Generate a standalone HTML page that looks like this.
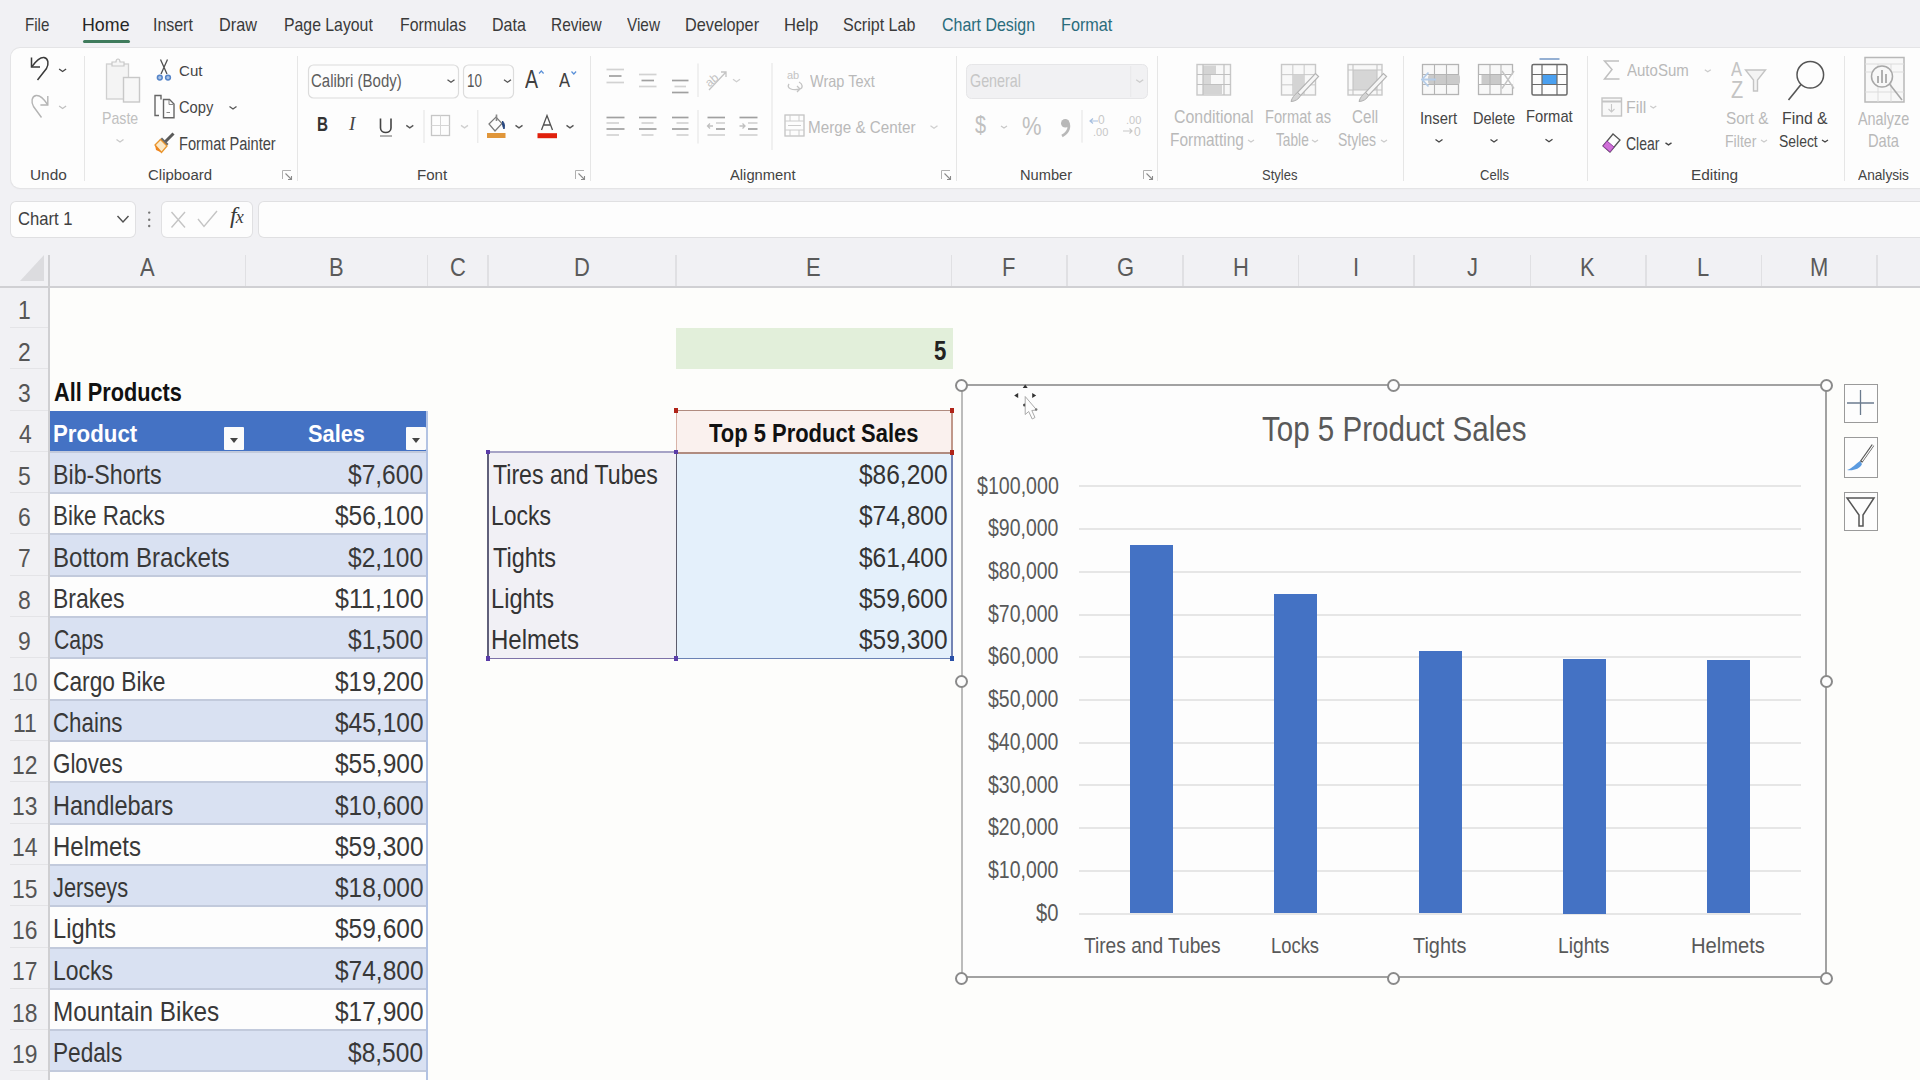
<!DOCTYPE html>
<html><head><meta charset="utf-8">
<style>
*{margin:0;padding:0;box-sizing:border-box}
html,body{width:1920px;height:1080px;overflow:hidden;background:#f1f1f4;font-family:"Liberation Sans",sans-serif;position:relative}
.t{position:absolute;white-space:nowrap;transform-origin:0 0;z-index:2}
.b{position:absolute}
svg{position:absolute;overflow:visible}
</style></head><body>

<div class="t" style="left:25.29px;top:-25.30px;font-size:18.17px;line-height:100px;color:#3a3a3a;transform:scaleX(0.8339);">File</div>
<div class="t" style="left:82.17px;top:-25.30px;font-size:18.17px;line-height:100px;color:#262626;transform:scaleX(0.9816);">Home</div>
<div class="t" style="left:153.27px;top:-25.30px;font-size:18.17px;line-height:100px;color:#3a3a3a;transform:scaleX(0.8765);">Insert</div>
<div class="t" style="left:219.00px;top:-25.30px;font-size:18.17px;line-height:100px;color:#3a3a3a;transform:scaleX(0.8958);">Draw</div>
<div class="t" style="left:283.73px;top:-25.30px;font-size:18.17px;line-height:100px;color:#3a3a3a;transform:scaleX(0.8709);">Page Layout</div>
<div class="t" style="left:399.98px;top:-25.30px;font-size:18.17px;line-height:100px;color:#3a3a3a;transform:scaleX(0.8734);">Formulas</div>
<div class="t" style="left:491.72px;top:-25.30px;font-size:18.17px;line-height:100px;color:#3a3a3a;transform:scaleX(0.8839);">Data</div>
<div class="t" style="left:551.26px;top:-25.30px;font-size:18.17px;line-height:100px;color:#3a3a3a;transform:scaleX(0.8497);">Review</div>
<div class="t" style="left:626.72px;top:-25.30px;font-size:18.17px;line-height:100px;color:#3a3a3a;transform:scaleX(0.8442);">View</div>
<div class="t" style="left:684.70px;top:-25.30px;font-size:18.17px;line-height:100px;color:#3a3a3a;transform:scaleX(0.8947);">Developer</div>
<div class="t" style="left:783.56px;top:-25.30px;font-size:18.17px;line-height:100px;color:#3a3a3a;transform:scaleX(0.9188);">Help</div>
<div class="t" style="left:842.68px;top:-25.30px;font-size:18.17px;line-height:100px;color:#3a3a3a;transform:scaleX(0.8864);">Script Lab</div>
<div class="t" style="left:941.90px;top:-25.30px;font-size:18.17px;line-height:100px;color:#2a6c7c;transform:scaleX(0.8785);">Chart Design</div>
<div class="t" style="left:1060.90px;top:-25.30px;font-size:18.17px;line-height:100px;color:#2a6c7c;transform:scaleX(0.8935);">Format</div>
<div class="b" style="left:83px;top:40px;width:47px;height:3px;background:#3f7b5c;border-radius:2px"></div>
<div class="b" style="left:11px;top:48px;width:1930px;height:140px;background:#fdfdfd;border-radius:9px;box-shadow:0 0 0 1px #e4e4e6, 0 1px 2px rgba(0,0,0,.06)"></div>
<div class="b" style="left:83.5px;top:56px;width:1px;height:125px;background:#e6e6e6"></div>
<div class="b" style="left:296.5px;top:56px;width:1px;height:125px;background:#e6e6e6"></div>
<div class="b" style="left:589.5px;top:56px;width:1px;height:125px;background:#e6e6e6"></div>
<div class="b" style="left:955.5px;top:56px;width:1px;height:125px;background:#e6e6e6"></div>
<div class="b" style="left:1156.5px;top:56px;width:1px;height:125px;background:#e6e6e6"></div>
<div class="b" style="left:1402.5px;top:56px;width:1px;height:125px;background:#e6e6e6"></div>
<div class="b" style="left:1586.5px;top:56px;width:1px;height:125px;background:#e6e6e6"></div>
<div class="b" style="left:1843.5px;top:56px;width:1px;height:125px;background:#e6e6e6"></div>
<div class="t" style="left:30.35px;top:125.26px;font-size:14.83px;line-height:100px;color:#444;transform:scaleX(1.0377);">Undo</div>
<div class="t" style="left:147.55px;top:125.26px;font-size:14.83px;line-height:100px;color:#444;transform:scaleX(1.0089);">Clipboard</div>
<div class="t" style="left:417.19px;top:125.26px;font-size:14.83px;line-height:100px;color:#444;transform:scaleX(1.0179);">Font</div>
<div class="t" style="left:729.70px;top:125.26px;font-size:14.83px;line-height:100px;color:#444;transform:scaleX(0.9951);">Alignment</div>
<div class="t" style="left:1019.83px;top:125.26px;font-size:14.83px;line-height:100px;color:#444;transform:scaleX(0.9884);">Number</div>
<div class="t" style="left:1262.01px;top:125.26px;font-size:14.83px;line-height:100px;color:#444;transform:scaleX(0.8772);">Styles</div>
<div class="t" style="left:1480.35px;top:125.26px;font-size:14.83px;line-height:100px;color:#444;transform:scaleX(0.8794);">Cells</div>
<div class="t" style="left:1691.47px;top:125.26px;font-size:14.83px;line-height:100px;color:#444;transform:scaleX(1.0384);">Editing</div>
<div class="t" style="left:1858.00px;top:125.26px;font-size:14.83px;line-height:100px;color:#444;transform:scaleX(0.9231);">Analysis</div>
<svg style="left:282px;top:170px" width="11" height="11"><path d="M0.5 9 V0.5 H9" fill="none" stroke="#b0b0b0" stroke-width="1"/><path d="M3.5 3.5 L9.5 9.5 M6 9.5 H9.5 V6" fill="none" stroke="#8a8a8a" stroke-width="1.1"/></svg>
<svg style="left:575px;top:170px" width="11" height="11"><path d="M0.5 9 V0.5 H9" fill="none" stroke="#b0b0b0" stroke-width="1"/><path d="M3.5 3.5 L9.5 9.5 M6 9.5 H9.5 V6" fill="none" stroke="#8a8a8a" stroke-width="1.1"/></svg>
<svg style="left:941px;top:170px" width="11" height="11"><path d="M0.5 9 V0.5 H9" fill="none" stroke="#b0b0b0" stroke-width="1"/><path d="M3.5 3.5 L9.5 9.5 M6 9.5 H9.5 V6" fill="none" stroke="#8a8a8a" stroke-width="1.1"/></svg>
<svg style="left:1143px;top:170px" width="11" height="11"><path d="M0.5 9 V0.5 H9" fill="none" stroke="#b0b0b0" stroke-width="1"/><path d="M3.5 3.5 L9.5 9.5 M6 9.5 H9.5 V6" fill="none" stroke="#8a8a8a" stroke-width="1.1"/></svg>
<div class="t" style="left:809.63px;top:31.71px;font-size:16.72px;line-height:100px;color:#b9b9b9;transform:scaleX(0.8685);">Wrap Text</div>
<div class="t" style="left:808.48px;top:77.76px;font-size:16.86px;line-height:100px;color:#b9b9b9;transform:scaleX(0.9033);">Merge & Center</div>
<div class="t" style="left:969.78px;top:30.70px;font-size:18.17px;line-height:100px;color:#c6c6c6;transform:scaleX(0.7888);">General</div>
<div class="t" style="left:974.80px;top:74.69px;font-size:23.98px;line-height:100px;color:#c0c0c0;transform:scaleX(0.8261);">$</div>
<div class="t" style="left:1022.23px;top:76.09px;font-size:25.44px;line-height:100px;color:#c0c0c0;transform:scaleX(0.8630);">%</div>
<div class="t" style="left:1174.21px;top:66.96px;font-size:17.44px;line-height:100px;color:#b9b9b9;transform:scaleX(0.9108);">Conditional</div>
<div class="t" style="left:1169.76px;top:90.26px;font-size:17.44px;line-height:100px;color:#b9b9b9;transform:scaleX(0.8857);">Formatting</div>
<div class="t" style="left:1264.83px;top:66.96px;font-size:17.44px;line-height:100px;color:#b9b9b9;transform:scaleX(0.8407);">Format as</div>
<div class="t" style="left:1276.23px;top:90.26px;font-size:17.44px;line-height:100px;color:#b9b9b9;transform:scaleX(0.7866);">Table</div>
<div class="t" style="left:1352.24px;top:66.96px;font-size:17.44px;line-height:100px;color:#b9b9b9;transform:scaleX(0.8716);">Cell</div>
<div class="t" style="left:1338.37px;top:90.26px;font-size:17.44px;line-height:100px;color:#b9b9b9;transform:scaleX(0.8020);">Styles</div>
<div class="t" style="left:1420.07px;top:69.31px;font-size:17.01px;line-height:100px;color:#454545;transform:scaleX(0.8704);">Insert</div>
<div class="t" style="left:1473.34px;top:69.31px;font-size:17.01px;line-height:100px;color:#454545;transform:scaleX(0.8549);">Delete</div>
<div class="t" style="left:1525.82px;top:67.41px;font-size:17.01px;line-height:100px;color:#454545;transform:scaleX(0.8668);">Format</div>
<div class="t" style="left:1627.00px;top:20.66px;font-size:15.99px;line-height:100px;color:#b9b9b9;transform:scaleX(0.9390);">AutoSum</div>
<div class="t" style="left:1625.73px;top:57.61px;font-size:17.01px;line-height:100px;color:#b9b9b9;transform:scaleX(0.9367);">Fill</div>
<div class="t" style="left:1626.30px;top:94.41px;font-size:17.88px;line-height:100px;color:#454545;transform:scaleX(0.7836);">Clear</div>
<div class="t" style="left:1731.30px;top:18.65px;font-size:20.35px;line-height:100px;color:#c4c4c4;transform:scaleX(0.8129);">A</div>
<div class="t" style="left:1730.90px;top:39.64px;font-size:23.26px;line-height:100px;color:#c4c4c4;transform:scaleX(0.8600);">Z</div>
<div class="t" style="left:1726.31px;top:67.61px;font-size:16.42px;line-height:100px;color:#b9b9b9;transform:scaleX(0.9329);">Sort &</div>
<div class="t" style="left:1724.67px;top:91.21px;font-size:16.42px;line-height:100px;color:#b9b9b9;transform:scaleX(0.8596);">Filter</div>
<div class="t" style="left:1781.73px;top:67.61px;font-size:16.42px;line-height:100px;color:#454545;transform:scaleX(0.9628);">Find &</div>
<div class="t" style="left:1778.97px;top:91.21px;font-size:16.42px;line-height:100px;color:#454545;transform:scaleX(0.8490);">Select</div>
<div class="t" style="left:1858.00px;top:68.70px;font-size:18.17px;line-height:100px;color:#b9b9b9;transform:scaleX(0.7919);">Analyze</div>
<div class="t" style="left:1867.83px;top:90.66px;font-size:17.44px;line-height:100px;color:#b9b9b9;transform:scaleX(0.8416);">Data</div>
<svg style="left:0;top:0" width="1920" height="200"><path d="M32 66.5 C36 61 40 57 44 57.5 C48.5 58.5 49 64 46.5 68.5 L37.5 80" fill="none" stroke="#3a3a3a" stroke-width="1.5"/><path d="M31.5 57.5 V67 H40" fill="none" stroke="#3a3a3a" stroke-width="1.5"/><path d="M59.1 68.95 L62.6 71.45 L66.1 68.95" fill="none" stroke="#444" stroke-width="1.3"/><path d="M47.5 104.5 C44 99 40 95 36 95.5 C31.5 96.5 31 102 33.5 106.5 L41.5 117.5" fill="none" stroke="#b4b4b4" stroke-width="1.4"/><path d="M47.8 96 V105 H40.4" fill="none" stroke="#b4b4b4" stroke-width="1.4"/><path d="M59.1 106.05 L62.6 108.55 L66.1 106.05" fill="none" stroke="#c0c0c0" stroke-width="1.3"/><rect x="106.5" y="64" width="22" height="35" fill="#f4f4f4" stroke="#d0d0d0" stroke-width="1.3"/><path d="M112 66 V62 H116 C116 58 120 58 120 62 H124 V66 Z" fill="#f6f6f6" stroke="#c8c8c8" stroke-width="1.2"/><rect x="123.5" y="77.5" width="16" height="24.5" fill="#f7f7f7" stroke="#c8c8c8" stroke-width="1.4"/><path d="M116.5 139.45 L120 141.95 L123.5 139.45" fill="none" stroke="#c8c8c8" stroke-width="1.3"/><path d="M160.5 59.5 L167 74 M167.5 59.5 L161 74" stroke="#505050" stroke-width="1.3"/><circle cx="159.8" cy="77.6" r="2.4" fill="#a9c3e6" stroke="#5584c8" stroke-width="1.5"/><circle cx="168" cy="77.6" r="2.4" fill="#a9c3e6" stroke="#5584c8" stroke-width="1.5"/><path d="M159 115.5 H155 V95.5 H161 V99.5" fill="none" stroke="#666" stroke-width="1.4"/><path d="M163.5 99.5 H169.5 L174 104 V117.8 H163.5 Z" fill="#fdfdfd" stroke="#666" stroke-width="1.4"/><path d="M169 100 V104.5 H173.5 M166.5 112.5 H170" fill="none" stroke="#888" stroke-width="1"/><path d="M229.5 106.45 L233 108.95 L236.5 106.45" fill="none" stroke="#555" stroke-width="1.3"/><path d="M165 142 L173.5 133.5" stroke="#5a5a5a" stroke-width="3"/><path d="M162 137.5 L168.5 144 L166 146.5 L159.5 140 Z" fill="#6a6a6a"/><path d="M155 145 L160.5 139.5 L167 146 L161.5 152.5 Z" fill="#fbe9c8" stroke="#e8962e" stroke-width="1.3"/><path d="M155 145 L158.5 148.5 L161.5 152.5 L156 150 Z" fill="#f0841c"/><rect x="308.5" y="65" width="150" height="33" rx="5" fill="#fdfdfd" stroke="#dcdcdc" stroke-width="1.2"/><rect x="463.5" y="65" width="50" height="33" rx="5" fill="#fdfdfd" stroke="#dcdcdc" stroke-width="1.2"/><path d="M447.5 79.75 L451 82.25 L454.5 79.75" fill="none" stroke="#555" stroke-width="1.3"/><path d="M504.0 79.75 L507.5 82.25 L511.0 79.75" fill="none" stroke="#555" stroke-width="1.3"/><path d="M424 110 V143 M477.8 110 V143" stroke="#e3e3e3" stroke-width="1"/><path d="M380.5 118.5 V128 C380.5 134 391 134 391 128 V118.5" fill="none" stroke="#444" stroke-width="1.6"/><path d="M380 136 H392" stroke="#666" stroke-width="1"/><path d="M406.3 125.35 L409.8 127.85 L413.3 125.35" fill="none" stroke="#555" stroke-width="1.3"/><rect x="431.5" y="115.5" width="18" height="20" fill="none" stroke="#c6c6c6" stroke-width="1.3"/><path d="M440.5 115.5 V135.5 M431.5 125.5 H449.5" stroke="#d6d6d6" stroke-width="1"/><path d="M461.0 125.35 L464.5 127.85 L468.0 125.35" fill="none" stroke="#cfcfcf" stroke-width="1.3"/><path d="M489 124 L496 117 L502 123.5 L495 131 Z" fill="#fdfdfd" stroke="#7a7a7a" stroke-width="1.2"/><path d="M496.5 114.5 V121" stroke="#888" stroke-width="1.6"/><path d="M502.5 121 C504.5 123 505 126 504 129 C503 127 502 124.5 502.5 121 Z" fill="#25457e" stroke="#25457e" stroke-width="1"/><rect x="487" y="133" width="18.5" height="5" fill="#e0963a"/><path d="M515.5 125.35 L519 127.85 L522.5 125.35" fill="none" stroke="#555" stroke-width="1.3"/><rect x="537.5" y="133.2" width="19.5" height="5" fill="#e0200c"/><path d="M566.5 125.35 L570 127.85 L573.5 125.35" fill="none" stroke="#555" stroke-width="1.3"/><path d="M606.5 69.5 H624" stroke="#d2d2d2" stroke-width="1.7"/><path d="M609 76 H621.5" stroke="#a0a0a0" stroke-width="1.7"/><path d="M606.5 82.5 H624" stroke="#d2d2d2" stroke-width="1.7"/><path d="M639 74.5 H656.5" stroke="#d2d2d2" stroke-width="1.7"/><path d="M641.5 80.5 H654" stroke="#a0a0a0" stroke-width="1.7"/><path d="M639 86.5 H656.5" stroke="#d2d2d2" stroke-width="1.7"/><path d="M672 80.5 H688.5" stroke="#a0a0a0" stroke-width="1.7"/><path d="M674.5 86.5 H686" stroke="#d2d2d2" stroke-width="1.7"/><path d="M672 92.5 H688.5" stroke="#a0a0a0" stroke-width="1.7"/><path d="M698 63.5 V97 M698 110 V143.5 M772 63 V150" stroke="#e3e3e3" stroke-width="1"/><path d="M606.5 117.5 H624.5" stroke="#a0a0a0" stroke-width="1.7"/><path d="M606.5 123 H619" stroke="#d2d2d2" stroke-width="1.7"/><path d="M606.5 129 H624.5" stroke="#a0a0a0" stroke-width="1.7"/><path d="M606.5 135 H619" stroke="#d2d2d2" stroke-width="1.7"/><path d="M639 117.5 H656.5" stroke="#a0a0a0" stroke-width="1.7"/><path d="M641.5 123 H653.5" stroke="#d2d2d2" stroke-width="1.7"/><path d="M639 129 H656.5" stroke="#a0a0a0" stroke-width="1.7"/><path d="M641.5 135 H653.5" stroke="#d2d2d2" stroke-width="1.7"/><path d="M672 117.5 H688.5" stroke="#a0a0a0" stroke-width="1.7"/><path d="M676.5 123 H688.5" stroke="#d2d2d2" stroke-width="1.7"/><path d="M672 129 H688.5" stroke="#a0a0a0" stroke-width="1.7"/><path d="M676.5 135 H688.5" stroke="#d2d2d2" stroke-width="1.7"/><path d="M707.5 117.5 H725" stroke="#a0a0a0" stroke-width="1.7"/><path d="M716 123 H725" stroke="#d2d2d2" stroke-width="1.7"/><path d="M716 129 H725" stroke="#a0a0a0" stroke-width="1.7"/><path d="M707.5 135 H725" stroke="#d2d2d2" stroke-width="1.7"/><path d="M713 126 H707.5 M710 123.5 L707.5 126 L710 128.5" fill="none" stroke="#c0c0c0" stroke-width="1.3"/><path d="M739.5 117.5 H757.5" stroke="#a0a0a0" stroke-width="1.7"/><path d="M748 123 H757.5" stroke="#d2d2d2" stroke-width="1.7"/><path d="M748 129 H757.5" stroke="#a0a0a0" stroke-width="1.7"/><path d="M739.5 135 H757.5" stroke="#d2d2d2" stroke-width="1.7"/><path d="M739.5 126 H745 M742.5 123.5 L745 126 L742.5 128.5" fill="none" stroke="#c0c0c0" stroke-width="1.3"/><text x="705" y="84" font-size="12" fill="#c4c4c4" transform="rotate(-40 712 80)" font-family="Liberation Sans">ab</text><path d="M709 90 L726 72 M721 72 H726 V77" fill="none" stroke="#c4c4c4" stroke-width="1.3"/><path d="M733.0 79.25 L736.5 81.75 L740.0 79.25" fill="none" stroke="#cfcfcf" stroke-width="1.3"/><text x="787" y="79" font-size="11" fill="#c4c4c4" font-family="Liberation Sans">ab</text><path d="M789 84 C786 88 792 91 800 89 M797 86 L800 89 L797 92 M799 82 C803 84 803 88 800 89" fill="none" stroke="#c4c4c4" stroke-width="1.3"/><rect x="785" y="115" width="19" height="21" fill="none" stroke="#c4c4c4" stroke-width="1.3"/><path d="M785 121 H804 M785 130 H804 M790 115 V121 M799 115 V121 M790 130 V136 M799 130 V136 M788 125.5 H801" stroke="#cccccc" stroke-width="1"/><path d="M930.5 125.75 L934 128.25 L937.5 125.75" fill="none" stroke="#cfcfcf" stroke-width="1.3"/><rect x="966.5" y="64.5" width="181" height="34" rx="5" fill="#f1f1f3" stroke="#e6e6e8" stroke-width="1"/><path d="M1130.7 66 V97" stroke="#e8e8ea" stroke-width="1"/><path d="M1136.2 79.75 L1139.7 82.25 L1143.2 79.75" fill="none" stroke="#cccccc" stroke-width="1.3"/><path d="M1001 126.0 L1004 128.0 L1007 126.0" fill="none" stroke="#c8c8c8" stroke-width="1.3"/><circle cx="1065.3" cy="123.3" r="4.3" fill="#b8b8b8"/><path d="M1067.5 122 C1070.5 126 1069 132 1062 136" fill="none" stroke="#b8b8b8" stroke-width="2.6"/><path d="M1082 110 V142.7" stroke="#e3e3e3" stroke-width="1"/><text x="1098" y="124" font-size="12" fill="#c8c8c8" font-family="Liberation Sans">0</text><text x="1093" y="136" font-size="11" fill="#c8c8c8" font-family="Liberation Sans">.00</text><path d="M1090 121 H1098 M1093 118.5 L1090 121 L1093 123.5" fill="none" stroke="#a8c0e0" stroke-width="1.2"/><text x="1126" y="124" font-size="11" fill="#c8c8c8" font-family="Liberation Sans">.00</text><text x="1134" y="136" font-size="12" fill="#c8c8c8" font-family="Liberation Sans">0</text><path d="M1123 131 H1132 M1129.5 128.5 L1132 131 L1129.5 133.5" fill="none" stroke="#c8c8c8" stroke-width="1.2"/><rect x="1197" y="64.5" width="33.5" height="30.5" fill="#f8f8f8" stroke="#c8c8c8" stroke-width="1.4"/><rect x="1203" y="65.5" width="13" height="9" fill="#d4d4d4"/><rect x="1203" y="75" width="8" height="9" fill="#d8d8d8"/><rect x="1203" y="85" width="19" height="9" fill="#d4d4d4"/><path d="M1203 64.5 V95 M1224 64.5 V95 M1197 74.5 H1230.5 M1197 84.5 H1230.5" stroke="#c0c0c0" stroke-width="1.2"/><rect x="1281.5" y="64.5" width="34.0" height="30.5" fill="#f8f8f8" stroke="#c8c8c8" stroke-width="1.4"/><path d="M1292.8333333333333 64.5 V95" stroke="#c8c8c8" stroke-width="1"/><path d="M1304.1666666666667 64.5 V95" stroke="#c8c8c8" stroke-width="1"/><path d="M1281.5 74.66666666666667 H1315.5" stroke="#c8c8c8" stroke-width="1"/><path d="M1281.5 84.83333333333333 H1315.5" stroke="#c8c8c8" stroke-width="1"/><rect x="1293" y="75" width="11" height="19" fill="#d4d4d4"/><g transform="translate(0,0)"><path d="M1318.6 76.5 L1315.4 73.5 L1297.4 92.5 L1300.6 95.5 Z" fill="#f6f6f6" stroke="#b4b4b4" stroke-width="1.1"/><path d="M1297.4 92.5 L1300.6 95.5 C1299 99 1295 101.5 1291 101.5 C1292 98 1294 95 1297.4 92.5 Z" fill="#d4d4d4" stroke="#b0b0b0" stroke-width="1"/></g><rect x="1348" y="64.5" width="34" height="30.5" fill="#f8f8f8" stroke="#c8c8c8" stroke-width="1.4"/><rect x="1353" y="70" width="24" height="20" fill="#d6d6d6"/><path d="M1353 64.5 V95 M1377 64.5 V95 M1348 70 H1382 M1348 90 H1382" stroke="#c4c4c4" stroke-width="1.1"/><g transform="translate(68,0)"><path d="M1318.6 76.5 L1315.4 73.5 L1297.4 92.5 L1300.6 95.5 Z" fill="#f6f6f6" stroke="#b4b4b4" stroke-width="1.1"/><path d="M1297.4 92.5 L1300.6 95.5 C1299 99 1295 101.5 1291 101.5 C1292 98 1294 95 1297.4 92.5 Z" fill="#d4d4d4" stroke="#b0b0b0" stroke-width="1"/></g><path d="M1248 140.0 L1251 142.0 L1254 140.0" fill="none" stroke="#cccccc" stroke-width="1.3"/><path d="M1312 140.0 L1315 142.0 L1318 140.0" fill="none" stroke="#cccccc" stroke-width="1.3"/><path d="M1381 140.0 L1384 142.0 L1387 140.0" fill="none" stroke="#cccccc" stroke-width="1.3"/><rect x="1422.5" y="64.5" width="36" height="30" fill="#f8f8f8" stroke="#b4b4b4" stroke-width="1.3"/><rect x="1428" y="74.5" width="32" height="10" rx="3" fill="#cacaca"/><path d="M1434.5 64.5 V94.5 M1446.5 64.5 V94.5 M1422.5 74.5 H1458.5 M1422.5 84.5 H1458.5" stroke="#b4b4b4" stroke-width="1.1"/><path d="M1428.5 72.5 L1422 79.5 L1428.5 86.5 M1423 79.5 H1436" fill="none" stroke="#b4cce8" stroke-width="1.8"/><rect x="1478.5" y="64.5" width="34" height="30" fill="#f8f8f8" stroke="#b4b4b4" stroke-width="1.3"/><rect x="1479" y="74.5" width="22" height="10" fill="#fdfdfd"/><rect x="1481.5" y="74.5" width="19.5" height="10" fill="#cacaca"/><rect x="1501.5" y="73.5" width="12" height="12" fill="#fdfdfd"/><path d="M1490 64.5 V94.5 M1501 64.5 V94.5 M1478.5 74.5 H1512.5 M1478.5 84.5 H1512.5" stroke="#b4b4b4" stroke-width="1.1"/><path d="M1502 71 L1514 88.5 M1514 71 L1502 88.5" stroke="#c4c4c4" stroke-width="1.4"/><rect x="1542" y="74.5" width="15" height="10" fill="#4aa0f0"/><rect x="1532" y="64.5" width="35" height="30.5" rx="1.5" fill="none" stroke="#6a6a6a" stroke-width="1.5"/><path d="M1542 64.5 V95 M1557 64.5 V95 M1532 74.5 H1567 M1532 84.5 H1567" stroke="#6a6a6a" stroke-width="1.2"/><path d="M1539.5 59 H1559.5" stroke="#7a9cc8" stroke-width="1.6"/><path d="M1435.5 139.45 L1439 141.95 L1442.5 139.45" fill="none" stroke="#444" stroke-width="1.3"/><path d="M1490.5 139.45 L1494 141.95 L1497.5 139.45" fill="none" stroke="#444" stroke-width="1.3"/><path d="M1545.5 139.25 L1549 141.75 L1552.5 139.25" fill="none" stroke="#444" stroke-width="1.3"/><path d="M1619 61 H1604.5 L1612 69.5 L1604.5 79 H1619.5" fill="none" stroke="#c0c0c0" stroke-width="1.5"/><path d="M1704.8 69.7 L1707.8 71.7 L1710.8 69.7" fill="none" stroke="#cccccc" stroke-width="1.3"/><rect x="1602" y="98" width="19.5" height="18" fill="#f8f8f8" stroke="#c4c4c4" stroke-width="1.4"/><path d="M1602 101.5 H1621.5" stroke="#c4c4c4" stroke-width="2"/><path d="M1611.5 104 V112 M1608.5 109 L1611.5 112 L1614.5 109" fill="none" stroke="#c8c8c8" stroke-width="1.1"/><path d="M1650.3 106.0 L1653.3 108.0 L1656.3 106.0" fill="none" stroke="#cccccc" stroke-width="1.3"/><path d="M1603 146 L1613 134 L1620 140 L1610 152 Z" fill="#fdfdfd" stroke="#555" stroke-width="1.3"/><path d="M1603 146 L1607 141 L1614 147 L1610 152 Z" fill="#d070d8" stroke="#9040a0" stroke-width="1"/><path d="M1665.5 142.9 L1668.5 144.9 L1671.5 142.9" fill="none" stroke="#444" stroke-width="1.3"/><path d="M1745.5 70 H1765.5 L1757.5 80 V91 H1753.5 V80 Z" fill="#f4f4f4" stroke="#c4c4c4" stroke-width="1.4"/><path d="M1761 140.0 L1764 142.0 L1767 140.0" fill="none" stroke="#cccccc" stroke-width="1.3"/><circle cx="1810.3" cy="74.8" r="13.3" fill="#fdfdfd" stroke="#555" stroke-width="1.5"/><path d="M1801 84.5 L1788.5 100" stroke="#555" stroke-width="1.6"/><path d="M1822 140.0 L1825 142.0 L1828 140.0" fill="none" stroke="#444" stroke-width="1.3"/><rect x="1865" y="57.5" width="39" height="44.5" fill="#f8f8f8" stroke="#b8b8b8" stroke-width="1.5"/><path d="M1865 64 H1904 M1865 72 H1904 M1865 92 H1904 M1878 64 V102 M1891 64 V102" stroke="#dcdcdc" stroke-width="1"/><circle cx="1882" cy="76.5" r="10.5" fill="#f8f8f8" stroke="#a8a8a8" stroke-width="1.5"/><path d="M1878 83 V76 M1882 83 V70 M1886 83 V74" stroke="#b0b0b0" stroke-width="2"/><path d="M1889.5 84 L1902 100" stroke="#a8a8a8" stroke-width="1.6"/></svg>
<div class="t" style="left:102.47px;top:69.31px;font-size:17.01px;line-height:100px;color:#c0c0c0;transform:scaleX(0.8324);">Paste</div>
<div class="t" style="left:178.65px;top:21.46px;font-size:15.41px;line-height:100px;color:#454545;transform:scaleX(0.9779);">Cut</div>
<div class="t" style="left:178.66px;top:57.71px;font-size:16.72px;line-height:100px;color:#454545;transform:scaleX(0.8797);">Copy</div>
<div class="t" style="left:178.83px;top:94.11px;font-size:17.88px;line-height:100px;color:#454545;transform:scaleX(0.8191);">Format Painter</div>
<div class="t" style="left:310.65px;top:30.55px;font-size:19.19px;line-height:100px;color:#5c5c5c;transform:scaleX(0.7803);">Calibri (Body)</div>
<div class="t" style="left:466.60px;top:30.55px;font-size:19.19px;line-height:100px;color:#555;transform:scaleX(0.6984);">10</div>
<div class="t" style="left:524.70px;top:28.84px;font-size:25.00px;line-height:100px;color:#404040;transform:scaleX(0.7820);">A</div>
<div class="t" style="left:559.00px;top:30.20px;font-size:21.08px;line-height:100px;color:#404040;transform:scaleX(0.7849);">A</div>
<svg style="left:0;top:0" width="1920" height="200"><path d="M539 73.5 L541.3 71 L543.6 73.5" fill="none" stroke="#5a90d8" stroke-width="1.2"/><path d="M571.5 71.5 L573.8 74 L576.1 71.5" fill="none" stroke="#5a90d8" stroke-width="1.2"/><path d="M541.5 130 L547 115.5 L552.5 130 M543.4 125 H550.6" fill="none" stroke="#505050" stroke-width="1.3"/></svg>
<div class="t" style="left:316.71px;top:75.35px;font-size:19.33px;line-height:100px;color:#333;font-weight:700;transform:scaleX(0.7887);">B</div>
<div class="t" style="left:349px;top:114px;font-size:19px;line-height:19px;color:#444;font-family:'Liberation Serif';font-style:italic">I</div>
<div class="b" style="left:11px;top:202px;width:124px;height:35px;background:#fdfdfd;border-radius:5px;box-shadow:0 0 0 1px #e0e0e2"></div>
<div class="t" style="left:18.17px;top:169.20px;font-size:18.17px;line-height:100px;color:#404040;transform:scaleX(0.9159);">Chart 1</div>
<div class="b" style="left:162px;top:202px;width:90px;height:35px;background:#fdfdfd;border-radius:5px;box-shadow:0 0 0 1px #e0e0e2"></div>
<div class="b" style="left:259px;top:202px;width:1670px;height:35px;background:#fdfdfd;border-radius:5px;box-shadow:0 0 0 1px #e0e0e2"></div>
<svg style="left:0;top:190px" width="300" height="60"><path d="M117.5 26 L123 32 L128.5 26" fill="none" stroke="#505050" stroke-width="1.4"/><circle cx="149.2" cy="22.6" r="1.2" fill="#777"/><circle cx="149.2" cy="29.7" r="1.2" fill="#777"/><circle cx="149.2" cy="36" r="1.2" fill="#777"/><path d="M171.5 22 L185 37.5 M185 22 L171.5 37.5" stroke="#c4c4c4" stroke-width="1.4"/><path d="M198 29 L204 36.5 L217 21" fill="none" stroke="#c4c4c4" stroke-width="1.4"/></svg>
<div class="t" style="left:230px;top:203px;font-size:24px;line-height:24px;color:#3a3a3a;font-family:'Liberation Serif';font-style:italic">f<span style="font-size:18px;margin-left:-1px">x</span></div>
<div class="b" style="left:49px;top:288px;width:1871px;height:792px;background:#fdfdfb"></div>
<div class="b" style="left:244.7px;top:255px;width:1.6px;height:32px;background:#e0e0e3"></div>
<div class="t" style="left:139.94px;top:217.04px;font-size:25.87px;line-height:100px;color:#5a5a5a;transform:scaleX(0.8500);">A</div>
<div class="b" style="left:426.7px;top:255px;width:1.6px;height:32px;background:#e0e0e3"></div>
<div class="t" style="left:328.86px;top:217.04px;font-size:25.87px;line-height:100px;color:#5a5a5a;transform:scaleX(0.8500);">B</div>
<div class="b" style="left:487.2px;top:255px;width:1.6px;height:32px;background:#e0e0e3"></div>
<div class="t" style="left:449.67px;top:217.04px;font-size:25.87px;line-height:100px;color:#5a5a5a;transform:scaleX(0.8500);">C</div>
<div class="b" style="left:675.2px;top:255px;width:1.6px;height:32px;background:#e0e0e3"></div>
<div class="t" style="left:573.70px;top:217.04px;font-size:25.87px;line-height:100px;color:#5a5a5a;transform:scaleX(0.8500);">D</div>
<div class="b" style="left:950.7px;top:255px;width:1.6px;height:32px;background:#e0e0e3"></div>
<div class="t" style="left:806.00px;top:217.04px;font-size:25.87px;line-height:100px;color:#5a5a5a;transform:scaleX(0.8500);">E</div>
<div class="b" style="left:1066.2px;top:255px;width:1.6px;height:32px;background:#e0e0e3"></div>
<div class="t" style="left:1002.10px;top:217.04px;font-size:25.87px;line-height:100px;color:#5a5a5a;transform:scaleX(0.8500);">F</div>
<div class="b" style="left:1182.2px;top:255px;width:1.6px;height:32px;background:#e0e0e3"></div>
<div class="t" style="left:1116.70px;top:217.04px;font-size:25.87px;line-height:100px;color:#5a5a5a;transform:scaleX(0.8500);">G</div>
<div class="b" style="left:1297.7px;top:255px;width:1.6px;height:32px;background:#e0e0e3"></div>
<div class="t" style="left:1232.83px;top:217.04px;font-size:25.87px;line-height:100px;color:#5a5a5a;transform:scaleX(0.8500);">H</div>
<div class="b" style="left:1413.2px;top:255px;width:1.6px;height:32px;background:#e0e0e3"></div>
<div class="t" style="left:1353.23px;top:217.04px;font-size:25.87px;line-height:100px;color:#5a5a5a;transform:scaleX(0.8500);">I</div>
<div class="b" style="left:1529.7px;top:255px;width:1.6px;height:32px;background:#e0e0e3"></div>
<div class="t" style="left:1467.41px;top:217.04px;font-size:25.87px;line-height:100px;color:#5a5a5a;transform:scaleX(0.8500);">J</div>
<div class="b" style="left:1645.2px;top:255px;width:1.6px;height:32px;background:#e0e0e3"></div>
<div class="t" style="left:1580.17px;top:217.04px;font-size:25.87px;line-height:100px;color:#5a5a5a;transform:scaleX(0.8500);">K</div>
<div class="b" style="left:1760.7px;top:255px;width:1.6px;height:32px;background:#e0e0e3"></div>
<div class="t" style="left:1697.10px;top:217.04px;font-size:25.87px;line-height:100px;color:#5a5a5a;transform:scaleX(0.8500);">L</div>
<div class="b" style="left:1876.2px;top:255px;width:1.6px;height:32px;background:#e0e0e3"></div>
<div class="t" style="left:1810.12px;top:217.04px;font-size:25.87px;line-height:100px;color:#5a5a5a;transform:scaleX(0.8500);">M</div>
<div class="b" style="left:1992.2px;top:255px;width:1.6px;height:32px;background:#e0e0e3"></div>
<div class="t" style="left:1927.08px;top:217.04px;font-size:25.87px;line-height:100px;color:#5a5a5a;transform:scaleX(0.8500);">N</div>
<div class="b" style="left:0px;top:286.4px;width:1920px;height:2px;background:#d0d0d3"></div>
<div class="b" style="left:48px;top:255px;width:2px;height:825px;background:#cfcfd2"></div>
<svg style="left:0;top:0" width="60" height="300"><polygon points="44,255 44,281 20,281" fill="#dcdcdf"/></svg>
<div class="b" style="left:10px;top:327px;width:38px;height:1px;background:#e4e4e7"></div>
<div class="t" style="left:18.11px;top:260.48px;font-size:26.60px;line-height:100px;color:#555555;transform:scaleX(0.8600);">1</div>
<div class="b" style="left:10px;top:368px;width:38px;height:1px;background:#e4e4e7"></div>
<div class="t" style="left:18.45px;top:301.78px;font-size:26.60px;line-height:100px;color:#555555;transform:scaleX(0.8600);">2</div>
<div class="b" style="left:10px;top:410px;width:38px;height:1px;background:#e4e4e7"></div>
<div class="t" style="left:18.45px;top:343.08px;font-size:26.60px;line-height:100px;color:#555555;transform:scaleX(0.8600);">3</div>
<div class="b" style="left:10px;top:451px;width:38px;height:1px;background:#e4e4e7"></div>
<div class="t" style="left:18.57px;top:384.38px;font-size:26.60px;line-height:100px;color:#555555;transform:scaleX(0.8600);">4</div>
<div class="b" style="left:10px;top:492px;width:38px;height:1px;background:#e4e4e7"></div>
<div class="t" style="left:18.45px;top:425.68px;font-size:26.60px;line-height:100px;color:#555555;transform:scaleX(0.8600);">5</div>
<div class="b" style="left:10px;top:533px;width:38px;height:1px;background:#e4e4e7"></div>
<div class="t" style="left:18.34px;top:466.98px;font-size:26.60px;line-height:100px;color:#555555;transform:scaleX(0.8600);">6</div>
<div class="b" style="left:10px;top:575px;width:38px;height:1px;background:#e4e4e7"></div>
<div class="t" style="left:18.45px;top:508.28px;font-size:26.60px;line-height:100px;color:#555555;transform:scaleX(0.8600);">7</div>
<div class="b" style="left:10px;top:616px;width:38px;height:1px;background:#e4e4e7"></div>
<div class="t" style="left:18.39px;top:549.58px;font-size:26.60px;line-height:100px;color:#555555;transform:scaleX(0.8600);">8</div>
<div class="b" style="left:10px;top:657px;width:38px;height:1px;background:#e4e4e7"></div>
<div class="t" style="left:18.45px;top:590.88px;font-size:26.60px;line-height:100px;color:#555555;transform:scaleX(0.8600);">9</div>
<div class="b" style="left:10px;top:699px;width:38px;height:1px;background:#e4e4e7"></div>
<div class="t" style="left:11.65px;top:632.18px;font-size:26.60px;line-height:100px;color:#555555;transform:scaleX(0.8600);">10</div>
<div class="b" style="left:10px;top:740px;width:38px;height:1px;background:#e4e4e7"></div>
<div class="t" style="left:12.62px;top:673.48px;font-size:26.60px;line-height:100px;color:#555555;transform:scaleX(0.8600);">11</div>
<div class="b" style="left:10px;top:781px;width:38px;height:1px;background:#e4e4e7"></div>
<div class="t" style="left:11.82px;top:714.78px;font-size:26.60px;line-height:100px;color:#555555;transform:scaleX(0.8600);">12</div>
<div class="b" style="left:10px;top:823px;width:38px;height:1px;background:#e4e4e7"></div>
<div class="t" style="left:11.70px;top:756.08px;font-size:26.60px;line-height:100px;color:#555555;transform:scaleX(0.8600);">13</div>
<div class="b" style="left:10px;top:864px;width:38px;height:1px;background:#e4e4e7"></div>
<div class="t" style="left:11.59px;top:797.38px;font-size:26.60px;line-height:100px;color:#555555;transform:scaleX(0.8600);">14</div>
<div class="b" style="left:10px;top:905px;width:38px;height:1px;background:#e4e4e7"></div>
<div class="t" style="left:11.70px;top:838.68px;font-size:26.60px;line-height:100px;color:#555555;transform:scaleX(0.8600);">15</div>
<div class="b" style="left:10px;top:947px;width:38px;height:1px;background:#e4e4e7"></div>
<div class="t" style="left:11.70px;top:879.98px;font-size:26.60px;line-height:100px;color:#555555;transform:scaleX(0.8600);">16</div>
<div class="b" style="left:10px;top:988px;width:38px;height:1px;background:#e4e4e7"></div>
<div class="t" style="left:11.82px;top:921.28px;font-size:26.60px;line-height:100px;color:#555555;transform:scaleX(0.8600);">17</div>
<div class="b" style="left:10px;top:1029px;width:38px;height:1px;background:#e4e4e7"></div>
<div class="t" style="left:11.70px;top:962.58px;font-size:26.60px;line-height:100px;color:#555555;transform:scaleX(0.8600);">18</div>
<div class="b" style="left:10px;top:1070px;width:38px;height:1px;background:#e4e4e7"></div>
<div class="t" style="left:11.76px;top:1003.88px;font-size:26.60px;line-height:100px;color:#555555;transform:scaleX(0.8600);">19</div>
<div class="b" style="left:10px;top:1112px;width:38px;height:1px;background:#e4e4e7"></div>
<div class="t" style="left:11.93px;top:1045.18px;font-size:26.60px;line-height:100px;color:#555555;transform:scaleX(0.8600);">20</div>
<div class="b" style="left:50px;top:411px;width:377px;height:40px;background:#4472c4"></div>
<div class="b" style="left:50px;top:452px;width:377px;height:41px;background:#d9e1f2"></div>
<div class="b" style="left:50px;top:493px;width:377px;height:41px;background:#fdfdfd"></div>
<div class="b" style="left:50px;top:534px;width:377px;height:42px;background:#d9e1f2"></div>
<div class="b" style="left:50px;top:576px;width:377px;height:41px;background:#fdfdfd"></div>
<div class="b" style="left:50px;top:617px;width:377px;height:41px;background:#d9e1f2"></div>
<div class="b" style="left:50px;top:658px;width:377px;height:42px;background:#fdfdfd"></div>
<div class="b" style="left:50px;top:700px;width:377px;height:41px;background:#d9e1f2"></div>
<div class="b" style="left:50px;top:741px;width:377px;height:41px;background:#fdfdfd"></div>
<div class="b" style="left:50px;top:782px;width:377px;height:42px;background:#d9e1f2"></div>
<div class="b" style="left:50px;top:824px;width:377px;height:41px;background:#fdfdfd"></div>
<div class="b" style="left:50px;top:865px;width:377px;height:41px;background:#d9e1f2"></div>
<div class="b" style="left:50px;top:906px;width:377px;height:42px;background:#fdfdfd"></div>
<div class="b" style="left:50px;top:948px;width:377px;height:41px;background:#d9e1f2"></div>
<div class="b" style="left:50px;top:989px;width:377px;height:41px;background:#fdfdfd"></div>
<div class="b" style="left:50px;top:1030px;width:377px;height:41px;background:#d9e1f2"></div>
<div class="b" style="left:50px;top:1071px;width:377px;height:42px;background:#fdfdfd"></div>
<div class="b" style="left:50px;top:451px;width:377px;height:2px;background:#c2cadc"></div>
<div class="b" style="left:50px;top:492px;width:377px;height:2px;background:#c2cadc"></div>
<div class="b" style="left:50px;top:533px;width:377px;height:2px;background:#c2cadc"></div>
<div class="b" style="left:50px;top:575px;width:377px;height:2px;background:#c2cadc"></div>
<div class="b" style="left:50px;top:616px;width:377px;height:2px;background:#c2cadc"></div>
<div class="b" style="left:50px;top:657px;width:377px;height:2px;background:#c2cadc"></div>
<div class="b" style="left:50px;top:699px;width:377px;height:2px;background:#c2cadc"></div>
<div class="b" style="left:50px;top:740px;width:377px;height:2px;background:#c2cadc"></div>
<div class="b" style="left:50px;top:781px;width:377px;height:2px;background:#c2cadc"></div>
<div class="b" style="left:50px;top:823px;width:377px;height:2px;background:#c2cadc"></div>
<div class="b" style="left:50px;top:864px;width:377px;height:2px;background:#c2cadc"></div>
<div class="b" style="left:50px;top:905px;width:377px;height:2px;background:#c2cadc"></div>
<div class="b" style="left:50px;top:947px;width:377px;height:2px;background:#c2cadc"></div>
<div class="b" style="left:50px;top:988px;width:377px;height:2px;background:#c2cadc"></div>
<div class="b" style="left:50px;top:1029px;width:377px;height:2px;background:#c2cadc"></div>
<div class="b" style="left:50px;top:1070px;width:377px;height:2px;background:#c2cadc"></div>
<div class="b" style="left:50px;top:1112px;width:377px;height:2px;background:#c2cadc"></div>
<div class="b" style="left:426px;top:411px;width:1.5px;height:669px;background:#b3c3e3"></div>
<div class="t" style="left:52.74px;top:425.13px;font-size:27.03px;line-height:100px;color:#383838;transform:scaleX(0.8608);">Bib-Shorts</div>
<div class="t" style="left:348.05px;top:425.13px;font-size:27.03px;line-height:100px;color:#383838;transform:scaleX(0.9079);">$7,600</div>
<div class="t" style="left:52.81px;top:466.43px;font-size:27.03px;line-height:100px;color:#383838;transform:scaleX(0.8284);">Bike Racks</div>
<div class="t" style="left:334.55px;top:466.43px;font-size:27.03px;line-height:100px;color:#383838;transform:scaleX(0.9066);">$56,100</div>
<div class="t" style="left:52.67px;top:507.73px;font-size:27.03px;line-height:100px;color:#383838;transform:scaleX(0.8914);">Bottom Brackets</div>
<div class="t" style="left:348.05px;top:507.73px;font-size:27.03px;line-height:100px;color:#383838;transform:scaleX(0.9079);">$2,100</div>
<div class="t" style="left:52.76px;top:549.03px;font-size:27.03px;line-height:100px;color:#383838;transform:scaleX(0.8497);">Brakes</div>
<div class="t" style="left:334.55px;top:549.03px;font-size:27.03px;line-height:100px;color:#383838;transform:scaleX(0.9261);">$11,100</div>
<div class="t" style="left:53.54px;top:590.33px;font-size:27.03px;line-height:100px;color:#383838;transform:scaleX(0.7875);">Caps</div>
<div class="t" style="left:348.05px;top:590.33px;font-size:27.03px;line-height:100px;color:#383838;transform:scaleX(0.9079);">$1,500</div>
<div class="t" style="left:53.46px;top:631.63px;font-size:27.03px;line-height:100px;color:#383838;transform:scaleX(0.8420);">Cargo Bike</div>
<div class="t" style="left:334.55px;top:631.63px;font-size:27.03px;line-height:100px;color:#383838;transform:scaleX(0.9066);">$19,200</div>
<div class="t" style="left:53.48px;top:672.93px;font-size:27.03px;line-height:100px;color:#383838;transform:scaleX(0.8265);">Chains</div>
<div class="t" style="left:334.55px;top:672.93px;font-size:27.03px;line-height:100px;color:#383838;transform:scaleX(0.9066);">$45,100</div>
<div class="t" style="left:53.48px;top:714.23px;font-size:27.03px;line-height:100px;color:#383838;transform:scaleX(0.8278);">Gloves</div>
<div class="t" style="left:334.55px;top:714.23px;font-size:27.03px;line-height:100px;color:#383838;transform:scaleX(0.9066);">$55,900</div>
<div class="t" style="left:52.72px;top:755.53px;font-size:27.03px;line-height:100px;color:#383838;transform:scaleX(0.8707);">Handlebars</div>
<div class="t" style="left:334.55px;top:755.53px;font-size:27.03px;line-height:100px;color:#383838;transform:scaleX(0.9066);">$10,600</div>
<div class="t" style="left:52.68px;top:796.83px;font-size:27.03px;line-height:100px;color:#383838;transform:scaleX(0.8886);">Helmets</div>
<div class="t" style="left:334.55px;top:796.83px;font-size:27.03px;line-height:100px;color:#383838;transform:scaleX(0.9066);">$59,300</div>
<div class="t" style="left:53.27px;top:838.13px;font-size:27.03px;line-height:100px;color:#383838;transform:scaleX(0.8062);">Jerseys</div>
<div class="t" style="left:334.55px;top:838.13px;font-size:27.03px;line-height:100px;color:#383838;transform:scaleX(0.9066);">$18,000</div>
<div class="t" style="left:52.71px;top:879.43px;font-size:27.03px;line-height:100px;color:#383838;transform:scaleX(0.8744);">Lights</div>
<div class="t" style="left:334.55px;top:879.43px;font-size:27.03px;line-height:100px;color:#383838;transform:scaleX(0.9066);">$59,600</div>
<div class="t" style="left:52.76px;top:920.73px;font-size:27.03px;line-height:100px;color:#383838;transform:scaleX(0.8495);">Locks</div>
<div class="t" style="left:334.55px;top:920.73px;font-size:27.03px;line-height:100px;color:#383838;transform:scaleX(0.9066);">$74,800</div>
<div class="t" style="left:52.65px;top:962.03px;font-size:27.03px;line-height:100px;color:#383838;transform:scaleX(0.9000);">Mountain Bikes</div>
<div class="t" style="left:334.55px;top:962.03px;font-size:27.03px;line-height:100px;color:#383838;transform:scaleX(0.9066);">$17,900</div>
<div class="t" style="left:52.79px;top:1003.33px;font-size:27.03px;line-height:100px;color:#383838;transform:scaleX(0.8378);">Pedals</div>
<div class="t" style="left:348.05px;top:1003.33px;font-size:27.03px;line-height:100px;color:#383838;transform:scaleX(0.9079);">$8,500</div>
<div class="t" style="left:53.76px;top:341.58px;font-size:26.31px;line-height:100px;color:#111;font-weight:700;transform:scaleX(0.8255);">All Products</div>
<div class="t" style="left:52.95px;top:384.24px;font-size:24.71px;line-height:100px;color:#fff;font-weight:700;transform:scaleX(0.9024);">Product</div>
<div class="t" style="left:308.35px;top:384.24px;font-size:24.71px;line-height:100px;color:#fff;font-weight:700;transform:scaleX(0.8827);">Sales</div>
<div class="b" style="left:224px;top:427px;width:20px;height:23px;background:#fbfbfb;border-radius:1px"></div>
<svg style="left:224px;top:427px" width="20" height="23"><polygon points="6,11 14,11 10,16" fill="#444"/></svg>
<div class="b" style="left:405.5px;top:427px;width:20px;height:23px;background:#fbfbfb;border-radius:1px"></div>
<svg style="left:405.5px;top:427px" width="20" height="23"><polygon points="6,11 14,11 10,16" fill="#444"/></svg>
<div class="b" style="left:676px;top:328px;width:276.5px;height:41.3px;background:#e2efda"></div>
<div class="t" style="left:934.13px;top:301.08px;font-size:26.89px;line-height:100px;color:#222;font-weight:700;transform:scaleX(0.8256);">5</div>
<div class="b" style="left:676px;top:410px;width:276px;height:43px;background:#faf1ee"></div>
<div class="t" style="left:709.38px;top:383.39px;font-size:25.15px;line-height:100px;color:#111;font-weight:700;transform:scaleX(0.8733);">Top 5 Product Sales</div>
<div class="b" style="left:675.5px;top:411px;width:1.6px;height:41px;background:#d8b4a8"></div>
<div class="b" style="left:951.2px;top:411px;width:1.6px;height:41px;background:#c0988a"></div>
<div class="b" style="left:488px;top:453px;width:188px;height:205px;background:#f1f0f5"></div>
<div class="b" style="left:676px;top:453px;width:276px;height:205px;background:#e4f0fb"></div>
<div class="b" style="left:487px;top:453.9px;width:1.6px;height:204.5px;background:#60607a"></div>
<div class="b" style="left:489px;top:451.4px;width:187px;height:1.6px;background:#a6a3c6"></div>
<div class="b" style="left:489px;top:657.6px;width:187px;height:1.8px;background:#7d72a8"></div>
<div class="b" style="left:675.5px;top:453.9px;width:1.6px;height:204.5px;background:#5c5c6c"></div>
<div class="b" style="left:951.4px;top:454.9px;width:1.6px;height:203.5px;background:#7484b4"></div>
<div class="b" style="left:678px;top:657.6px;width:273px;height:1.8px;background:#6b82b4"></div>
<div class="b" style="left:676px;top:409.5px;width:276px;height:1.8px;background:#b08c80"></div>
<div class="b" style="left:676px;top:452px;width:276px;height:1.8px;background:#b08c80"></div>
<div class="b" style="left:673.8px;top:408.2px;width:4.4px;height:4.4px;background:#b02418"></div>
<div class="b" style="left:949.8px;top:408.2px;width:4.4px;height:4.4px;background:#b02418"></div>
<div class="b" style="left:949.8px;top:450.3px;width:4.4px;height:4.4px;background:#b02418"></div>
<div class="b" style="left:485.8px;top:449.7px;width:4.4px;height:4.4px;background:#5a3ca8"></div>
<div class="b" style="left:673.8px;top:449.7px;width:4.4px;height:4.4px;background:#5a3ca8"></div>
<div class="b" style="left:485.8px;top:656.1999999999999px;width:4.4px;height:4.4px;background:#5a3ca8"></div>
<div class="b" style="left:673.8px;top:656.1999999999999px;width:4.4px;height:4.4px;background:#5a3ca8"></div>
<div class="b" style="left:949.8px;top:656.1999999999999px;width:4.4px;height:4.4px;background:#2a50a8"></div>
<div class="t" style="left:492.54px;top:425.13px;font-size:27.03px;line-height:100px;color:#333;transform:scaleX(0.8558);">Tires and Tubes</div>
<div class="t" style="left:858.65px;top:425.13px;font-size:27.03px;line-height:100px;color:#333;transform:scaleX(0.9066);">$86,200</div>
<div class="t" style="left:491.16px;top:466.43px;font-size:27.03px;line-height:100px;color:#333;transform:scaleX(0.8495);">Locks</div>
<div class="t" style="left:858.65px;top:466.43px;font-size:27.03px;line-height:100px;color:#333;transform:scaleX(0.9066);">$74,800</div>
<div class="t" style="left:492.53px;top:507.73px;font-size:27.03px;line-height:100px;color:#333;transform:scaleX(0.8678);">Tights</div>
<div class="t" style="left:858.65px;top:507.73px;font-size:27.03px;line-height:100px;color:#333;transform:scaleX(0.9066);">$61,400</div>
<div class="t" style="left:491.11px;top:549.03px;font-size:27.03px;line-height:100px;color:#333;transform:scaleX(0.8744);">Lights</div>
<div class="t" style="left:858.65px;top:549.03px;font-size:27.03px;line-height:100px;color:#333;transform:scaleX(0.9066);">$59,600</div>
<div class="t" style="left:491.08px;top:590.33px;font-size:27.03px;line-height:100px;color:#333;transform:scaleX(0.8886);">Helmets</div>
<div class="t" style="left:858.65px;top:590.33px;font-size:27.03px;line-height:100px;color:#333;transform:scaleX(0.9066);">$59,300</div>
<div class="b" style="left:961px;top:384px;width:866px;height:594px;background:#fdfdfd;border:2px solid #a2a2a2;border-left-color:#bcbcbc"></div>
<div class="t" style="left:1261.91px;top:378.56px;font-size:35.32px;line-height:100px;color:#595959;transform:scaleX(0.8371);">Top 5 Product Sales</div>
<div class="b" style="left:1079px;top:913px;width:722px;height:2px;background:#e6e6e6"></div>
<div class="t" style="left:1036.20px;top:862.69px;font-size:23.98px;line-height:100px;color:#595959;transform:scaleX(0.8418);">$0</div>
<div class="b" style="left:1079px;top:870px;width:722px;height:2px;background:#e6e6e6"></div>
<div class="t" style="left:988.11px;top:819.99px;font-size:23.98px;line-height:100px;color:#595959;transform:scaleX(0.8129);">$10,000</div>
<div class="b" style="left:1079px;top:827px;width:722px;height:2px;background:#e6e6e6"></div>
<div class="t" style="left:988.11px;top:777.29px;font-size:23.98px;line-height:100px;color:#595959;transform:scaleX(0.8129);">$20,000</div>
<div class="b" style="left:1079px;top:784px;width:722px;height:2px;background:#e6e6e6"></div>
<div class="t" style="left:988.11px;top:734.59px;font-size:23.98px;line-height:100px;color:#595959;transform:scaleX(0.8129);">$30,000</div>
<div class="b" style="left:1079px;top:742px;width:722px;height:2px;background:#e6e6e6"></div>
<div class="t" style="left:988.11px;top:691.89px;font-size:23.98px;line-height:100px;color:#595959;transform:scaleX(0.8129);">$40,000</div>
<div class="b" style="left:1079px;top:699px;width:722px;height:2px;background:#e6e6e6"></div>
<div class="t" style="left:988.11px;top:649.19px;font-size:23.98px;line-height:100px;color:#595959;transform:scaleX(0.8129);">$50,000</div>
<div class="b" style="left:1079px;top:656px;width:722px;height:2px;background:#e6e6e6"></div>
<div class="t" style="left:988.11px;top:606.49px;font-size:23.98px;line-height:100px;color:#595959;transform:scaleX(0.8129);">$60,000</div>
<div class="b" style="left:1079px;top:614px;width:722px;height:2px;background:#e6e6e6"></div>
<div class="t" style="left:988.11px;top:563.79px;font-size:23.98px;line-height:100px;color:#595959;transform:scaleX(0.8129);">$70,000</div>
<div class="b" style="left:1079px;top:571px;width:722px;height:2px;background:#e6e6e6"></div>
<div class="t" style="left:988.11px;top:521.09px;font-size:23.98px;line-height:100px;color:#595959;transform:scaleX(0.8129);">$80,000</div>
<div class="b" style="left:1079px;top:528px;width:722px;height:2px;background:#e6e6e6"></div>
<div class="t" style="left:988.11px;top:478.39px;font-size:23.98px;line-height:100px;color:#595959;transform:scaleX(0.8129);">$90,000</div>
<div class="b" style="left:1079px;top:485px;width:722px;height:2px;background:#e6e6e6"></div>
<div class="t" style="left:976.70px;top:435.69px;font-size:23.98px;line-height:100px;color:#595959;transform:scaleX(0.8188);">$100,000</div>
<div class="b" style="left:1129.9px;top:545.4px;width:43px;height:368.1px;background:#4472c4"></div>
<div class="t" style="left:1083.52px;top:896.45px;font-size:21.80px;line-height:100px;color:#595959;transform:scaleX(0.8785);">Tires and Tubes</div>
<div class="b" style="left:1274.2px;top:594.1px;width:43px;height:319.4px;background:#4472c4"></div>
<div class="t" style="left:1271.43px;top:896.45px;font-size:21.80px;line-height:100px;color:#595959;transform:scaleX(0.8438);">Locks</div>
<div class="b" style="left:1418.5px;top:651.3px;width:43px;height:262.2px;background:#4472c4"></div>
<div class="t" style="left:1413.40px;top:896.45px;font-size:21.80px;line-height:100px;color:#595959;transform:scaleX(0.9121);">Tights</div>
<div class="b" style="left:1562.8px;top:659.0px;width:43px;height:254.5px;background:#4472c4"></div>
<div class="t" style="left:1557.66px;top:896.45px;font-size:21.80px;line-height:100px;color:#595959;transform:scaleX(0.8814);">Lights</div>
<div class="b" style="left:1707.1px;top:660.3px;width:43px;height:253.2px;background:#4472c4"></div>
<div class="t" style="left:1690.89px;top:896.45px;font-size:21.80px;line-height:100px;color:#595959;transform:scaleX(0.9251);">Helmets</div>
<div class="b" style="left:954.5px;top:378.5px;width:13px;height:13px;background:#fdfdfd;border:2px solid #8a8a8a;border-radius:50%"></div>
<div class="b" style="left:1386.5px;top:378.5px;width:13px;height:13px;background:#fdfdfd;border:2px solid #8a8a8a;border-radius:50%"></div>
<div class="b" style="left:1819.5px;top:378.5px;width:13px;height:13px;background:#fdfdfd;border:2px solid #8a8a8a;border-radius:50%"></div>
<div class="b" style="left:954.5px;top:674.5px;width:13px;height:13px;background:#fdfdfd;border:2px solid #8a8a8a;border-radius:50%"></div>
<div class="b" style="left:1819.5px;top:674.5px;width:13px;height:13px;background:#fdfdfd;border:2px solid #8a8a8a;border-radius:50%"></div>
<div class="b" style="left:954.5px;top:971.5px;width:13px;height:13px;background:#fdfdfd;border:2px solid #8a8a8a;border-radius:50%"></div>
<div class="b" style="left:1386.5px;top:971.5px;width:13px;height:13px;background:#fdfdfd;border:2px solid #8a8a8a;border-radius:50%"></div>
<div class="b" style="left:1819.5px;top:971.5px;width:13px;height:13px;background:#fdfdfd;border:2px solid #8a8a8a;border-radius:50%"></div>
<div class="b" style="left:1843.5px;top:384px;width:34px;height:39px;background:#fdfdfd;border:1.5px solid #9a9a9a"></div>
<div class="b" style="left:1843.5px;top:437px;width:34px;height:40.5px;background:#fdfdfd;border:1.5px solid #9a9a9a"></div>
<div class="b" style="left:1843.5px;top:492px;width:34px;height:39px;background:#fdfdfd;border:1.5px solid #9a9a9a"></div>
<svg style="left:1843px;top:385px" width="35" height="38"><path d="M17.5 5 V30 M4 18 H31" stroke="#6b7b8e" stroke-width="1.3"/></svg>
<svg style="left:1843px;top:438px" width="35" height="38"><path d="M30 7 L18 24" stroke="#555" stroke-width="3"/><path d="M31 6 L19 23" stroke="#fff" stroke-width="1.2"/><path d="M17 23 C12 26 10 30 4 32 C10 33 17 31 19 26 Z" fill="#5b9be0"/></svg>
<svg style="left:1843px;top:493px" width="35" height="38"><path d="M4 5 H31 L20 22 V33 H16 V22 Z" fill="none" stroke="#555" stroke-width="1.5"/></svg>
<svg style="left:1000px;top:375px;z-index:5" width="60" height="60"><g transform="translate(25.2,20.5)"><path d="M-11 0 L-7 -2.5 V2.5 Z M11 0 L7 -2.5 V2.5 Z M0 -11 L-2.5 -7.5 H2.5 Z" fill="#333"/><circle cx="-0.5" cy="9.5" r="1.6" fill="#333"/><path d="M0 1 V19 L3.5 16 L7 23.5 L9.8 22 L6.6 15 L11.5 14.5 Z" fill="#fdfdfd" stroke="#a0a0a0" stroke-width="0.9"/><circle cx="11" cy="14" r="1.2" fill="#777"/></g></svg>
</body></html>
